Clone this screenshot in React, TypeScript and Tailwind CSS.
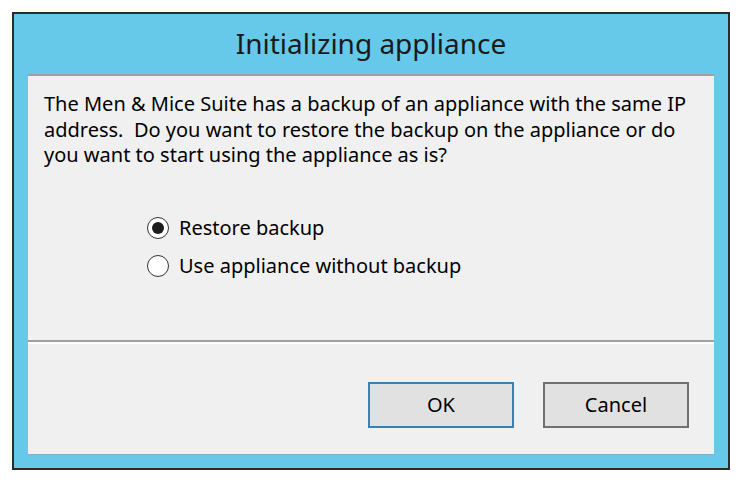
export default function App() {
  const font = { fontFamily: '"Noto Sans", "Open Sans", sans-serif' };
  return (
    <div className="w-[740px] h-[482px] bg-white pl-[12px] pt-[12px]" style={font}>
      <div className="w-[718px] h-[458px] border-2 border-[#2b2b2b] bg-[#66c9ea] px-[14px] pb-[14px] flex flex-col">
        <div className="h-[60px] flex items-center justify-center text-[28px] text-[#1a1a1a] pb-[3px]">
          Initializing appliance
        </div>
        <div className="flex-1 flex flex-col bg-[#f0f0f0] border-t-2 border-[#a0a0a0] shadow-[0_1px_0_#7ab4c8]">
          <div className="h-[264px] flex flex-col px-[16px] pt-[15px]">
            <p className="text-[20px] leading-[25.5px] text-black whitespace-pre">
              {'The Men & Mice Suite has a backup of an appliance with the same IP\naddress.  Do you want to restore the backup on the appliance or do\nyou want to start using the appliance as is?'}
            </p>
            <div className="mt-[49px] pl-[103px] flex flex-col gap-[16px]">
              <label className="flex items-center gap-[10px] h-[22px] text-[20px] text-black">
                <span className="w-[22px] h-[22px] rounded-full border-[1.5px] border-[#333] bg-white flex items-center justify-center">
                  <span className="w-[12px] h-[12px] rounded-full bg-[#1c1c1c]" />
                </span>
                Restore backup
              </label>
              <label className="flex items-center gap-[10px] h-[22px] text-[20px] text-black">
                <span className="w-[22px] h-[22px] rounded-full border-[1.5px] border-[#333] bg-white" />
                Use appliance without backup
              </label>
            </div>
          </div>
          <div className="h-[2px] bg-[#a0a0a0]" />
          <div className="h-[2px] bg-white" />
          <div className="flex-1 flex items-start justify-end gap-[29px] pt-[38px] pr-[25px]">
            <button className="w-[146px] h-[46px] border-2 border-[#3c7fb1] bg-[#e1e1e1] text-[20px] text-black">
              OK
            </button>
            <button className="w-[146px] h-[46px] border-2 border-[#707070] bg-[#e1e1e1] text-[20px] text-black">
              Cancel
            </button>
          </div>
        </div>
      </div>
    </div>
  );
}
